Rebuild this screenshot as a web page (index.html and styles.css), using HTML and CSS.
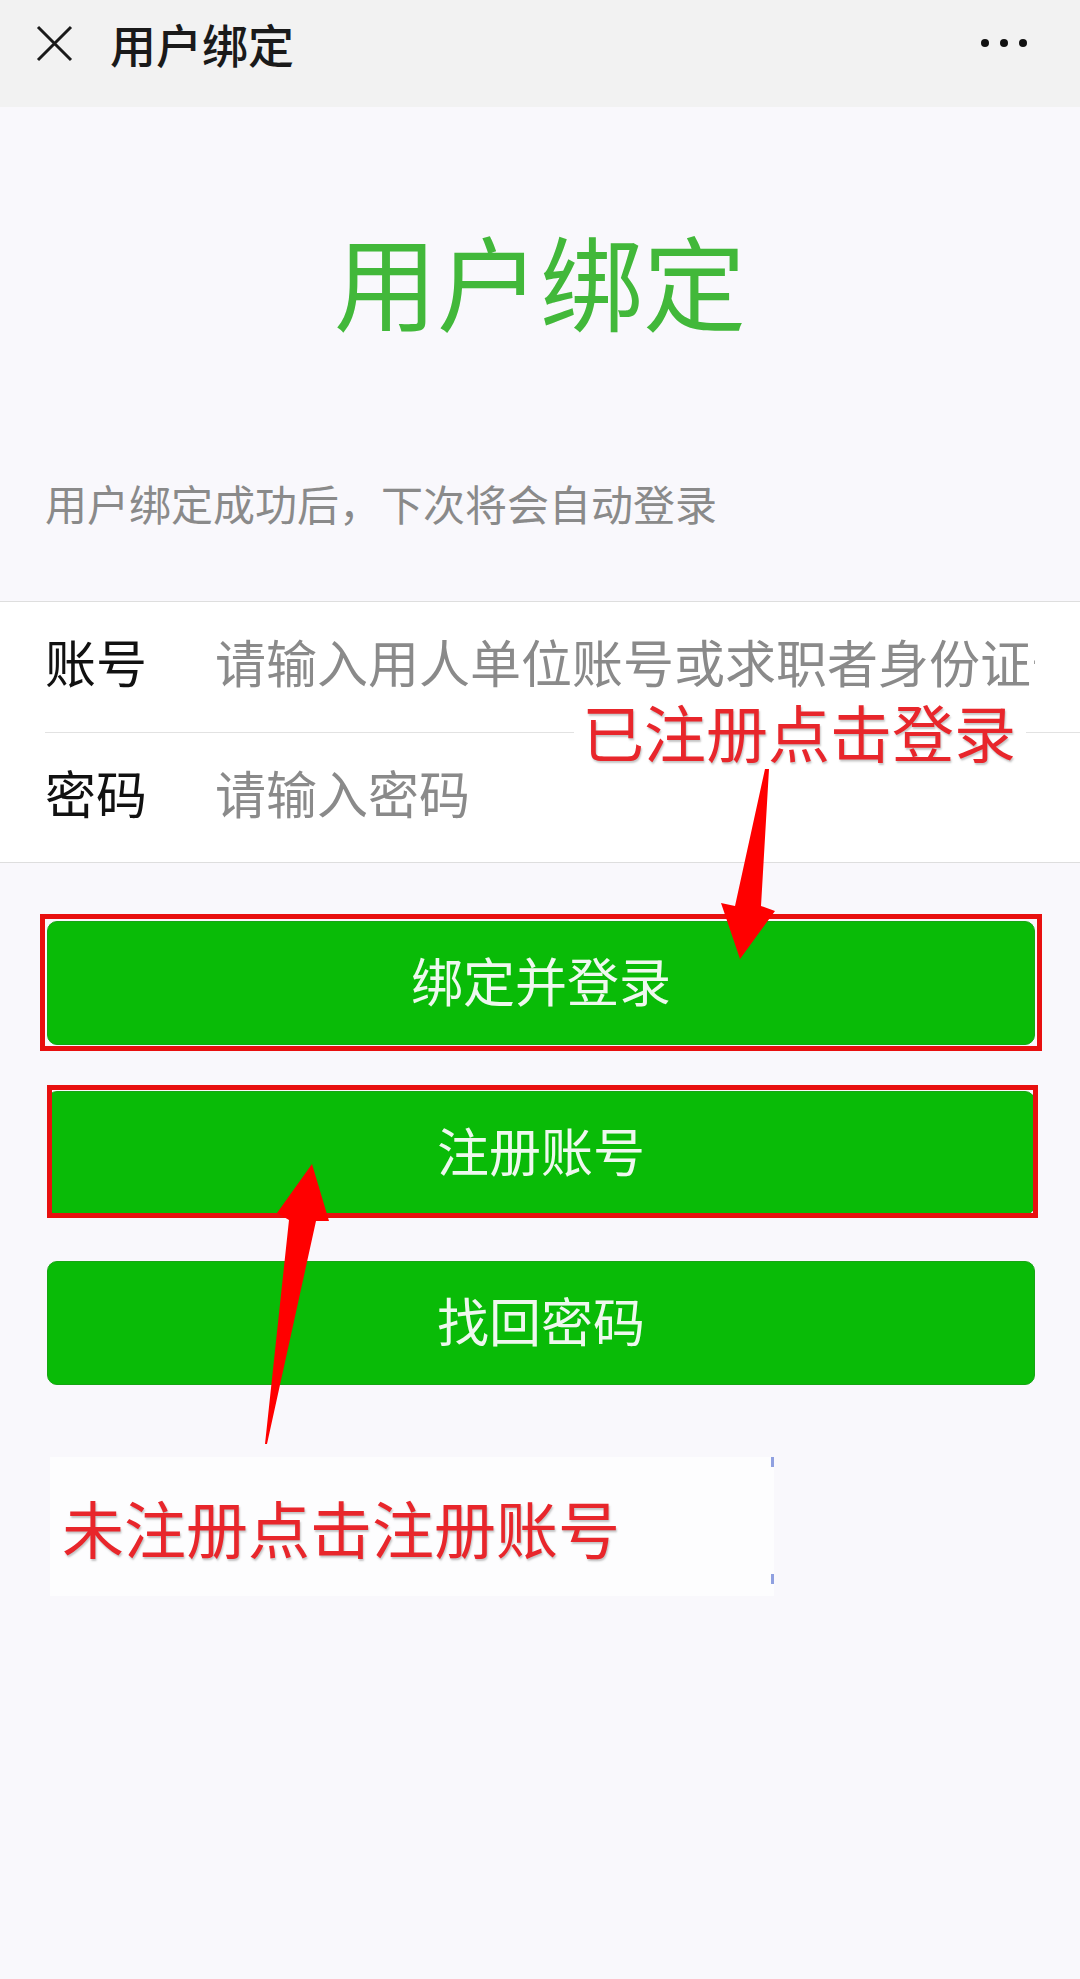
FILE: index.html
```html
<!DOCTYPE html>
<html lang="zh-CN">
<head>
<meta charset="utf-8">
<meta name="viewport" content="width=device-width, initial-scale=1.0">
<title>用户绑定</title>
<link rel="stylesheet" href="styles.css">
</head>
<body>
<div class="topbar">
  <svg class="close" viewBox="0 0 37 37"><path d="M2 2L35 35M35 2L2 35" stroke="#1a1a1a" stroke-width="3" fill="none"/></svg>
  <span class="topbar-title">用户绑定</span>
  <div class="more"><i></i><i></i><i></i></div>
</div>

<div class="page">
  <h1 class="hero">用户绑定</h1>
  <p class="hint">用户绑定成功后，下次将会自动登录</p>

  <div class="form">
    <label class="row"><span class="label">账号</span><input class="field" type="text" placeholder="请输入用人单位账号或求职者身份证号"></label>
    <label class="row"><span class="label">密码</span><input class="field" type="password" placeholder="请输入密码"></label>
  </div>

  <div class="actions">
    <button class="btn mark-a">绑定并登录</button>
    <button class="btn mark-b">注册账号</button>
    <button class="btn">找回密码</button>
  </div>
</div>

<!-- annotations drawn over the screenshot -->
<div class="note note-login">已注册点击登录</div>
<div class="note note-reg">未注册点击注册账号</div>
<svg class="arrows" viewBox="0 0 1080 1979">
  <polygon points="765,769 769,769 761,906 775,911 740,959 721,903 735,906" fill="#ff0000"/>
  <polygon points="312,1164 329,1221 316,1221 267,1444 265,1444 289,1220 277,1213" fill="#ff0000"/>
</svg>
</body>
</html>
```

FILE: styles.css
```css
*{
margin:0;
padding:0;
box-sizing:border-box;
}
body{
position:relative;
width:1080px;
min-height:1979px;
background:#f9f8fc;
font-family:"Noto Sans CJK SC","Noto Sans",sans-serif;
color:#111;
overflow:hidden;
}
.topbar{
height:107px;
background:#f2f2f2;
display:flex;
align-items:center;
padding:0 53px 21px 36px;
}
.close{
width:37px;
height:37px;
}
.topbar-title{
margin-left:37px;
font-size:46px;
line-height:60px;
font-weight:500;
color:#1a1a1a;
}
.more{
margin-left:auto;
display:flex;
gap:11px;
}
.more i{
width:8px;
height:8px;
border-radius:50%;
background:#111;
}
.hero{
margin-top:110px;
text-align:center;
font-size:103px;
line-height:125px;
font-weight:400;
color:#42b83a;
}
.hint{
margin-top:131px;
padding-left:45px;
font-size:42px;
line-height:60px;
color:#8a8a8a;
}
.form{
margin-top:68px;
background:#fff;
border-top:1px solid #dedede;
border-bottom:1px solid #dedede;
padding-left:45px;
}
.row{
height:130px;
display:flex;
align-items:center;
padding-bottom:12px;
}
.row+.row{
border-top:1px solid #e2e2e2;
}
.label{
width:170px;
flex:none;
font-size:51px;
color:#111;
}
.field{
width:820px;
border:none;
outline:none;
background:transparent;
font-family:inherit;
font-size:51px;
color:#111;
}
.field::placeholder{
color:#8a8a8a;
}
.actions{
padding:58px 45px 0 47px;
display:flex;
flex-direction:column;
gap:46px;
}
.btn{
position:relative;
height:124px;
border:1px solid #17a514;
border-radius:10px;
background:#09bb07;
color:#eef8ee;
font-family:inherit;
font-size:52px;
padding-bottom:8px;
}
.mark-a::after,.mark-b::after{
content:'';
position:absolute;
border:5px solid #e8100f;
}
.mark-a::after{
top:-8px;
left:-8px;
right:-8px;
bottom:-7px;
}
.mark-b::after{
top:-7px;
left:-1px;
right:-4px;
bottom:-4px;
}
.note{
position:absolute;
display:flex;
align-items:center;
background:#fff;
font-size:62px;
line-height:1;
color:#e8262b;
text-shadow:1px 2px 2px rgba(90,90,90,.35);
}
.note-login{
left:574px;
top:692px;
width:452px;
height:78px;
padding-left:8px;
}
.note-reg{
left:50px;
top:1457px;
width:724px;
height:139px;
padding-left:12px;
background:#fdfdfe;
}
.note-reg::before,.note-reg::after{
content:'';
position:absolute;
right:0;
width:3px;
height:10px;
background:#8fa0e0;
}
.note-reg::before{
top:0;
}
.note-reg::after{
bottom:12px;
}
.arrows{
position:absolute;
left:0;
top:0;
width:1080px;
height:1979px;
pointer-events:none;
}
```
